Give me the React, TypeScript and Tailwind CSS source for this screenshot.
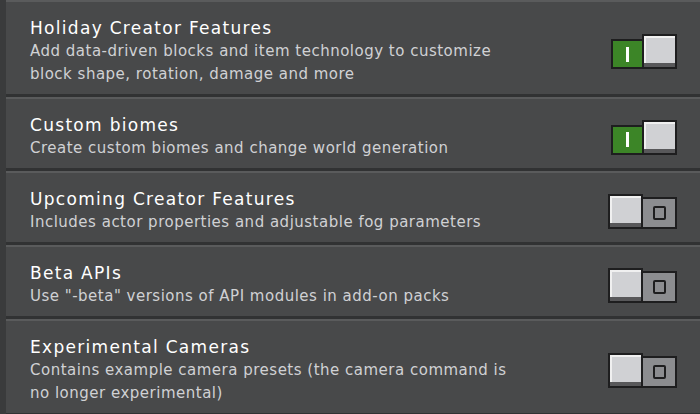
import React from "react";

type Item = { title: string; desc: string[]; on: boolean };

const items: Item[] = [
  {
    title: "Holiday Creator Features",
    desc: [
      "Add data-driven blocks and item technology to customize",
      "block shape, rotation, damage and more",
    ],
    on: true,
  },
  { title: "Custom biomes", desc: ["Create custom biomes and change world generation"], on: true },
  {
    title: "Upcoming Creator Features",
    desc: ["Includes actor properties and adjustable fog parameters"],
    on: false,
  },
  { title: "Beta APIs", desc: ['Use "-beta" versions of API modules in add-on packs'], on: false },
  {
    title: "Experimental Cameras",
    desc: [
      "Contains example camera presets (the camera command is",
      "no longer experimental)",
    ],
    on: false,
  },
];

function Knob() {
  return (
    <div className="w-[35px] h-[35px] border-2 border-[#1e1e1f] bg-[#58585a] flex flex-col relative z-10">
      <div className="flex-1 bg-[#d0d1d4] border-t-2 border-l-2 border-[#f0f0f0]" />
      <div className="h-[4px] bg-[#58585a]" />
    </div>
  );
}

function Toggle({ on }: { on: boolean }) {
  if (on) {
    return (
      <div className="flex items-end">
        <div className="w-[33px] h-[30px] border-2 border-[#1e1e1f] bg-[#3c8527] flex items-center justify-center -mr-[2px]">
          <div className="w-[3px] h-[15px] bg-white" />
        </div>
        <Knob />
      </div>
    );
  }
  return (
    <div className="flex items-end">
      <Knob />
      <div className="w-[36px] h-[32px] border-2 border-[#1e1e1f] bg-[#8c8d90] flex items-center justify-center -ml-[2px]">
        <div className="w-[13px] h-[14px] border-2 border-[#1e1e1f] rounded-[2px]" />
      </div>
    </div>
  );
}

export default function App() {
  return (
    <div
      className="w-[700px] h-[414px] overflow-hidden flex bg-[#48494a]"
      style={{ fontFamily: '"DejaVu Sans", sans-serif' }}
    >
      <div className="w-[6px] shrink-0 bg-[#3a3b3c]" />
      <div className="flex-1 flex flex-col -mt-[3px]">
        {items.map((it, i) => (
          <div key={i} className="flex flex-col">
            <div className="h-[3px] bg-[#313233]" />
            <div className="h-[2px] bg-[#5a5b5c]" />
            <div className="flex items-center pl-[24px] pr-[23px] pt-[15px] pb-[8px]">
              <div className="flex-1 flex flex-col">
                <div className="text-[17px] leading-[23px] tracking-[1.3px] text-white">{it.title}</div>
                {it.desc.map((d, j) => (
                  <div key={j} className="text-[15px] leading-[23px] tracking-[0.5px] text-[#d0d1d4]">
                    {d}
                  </div>
                ))}
              </div>
              <Toggle on={it.on} />
            </div>
          </div>
        ))}
        <div className="h-[3px] bg-[#313233]" />
        <div className="h-[2px] bg-[#5a5b5c]" />
      </div>
    </div>
  );
}
